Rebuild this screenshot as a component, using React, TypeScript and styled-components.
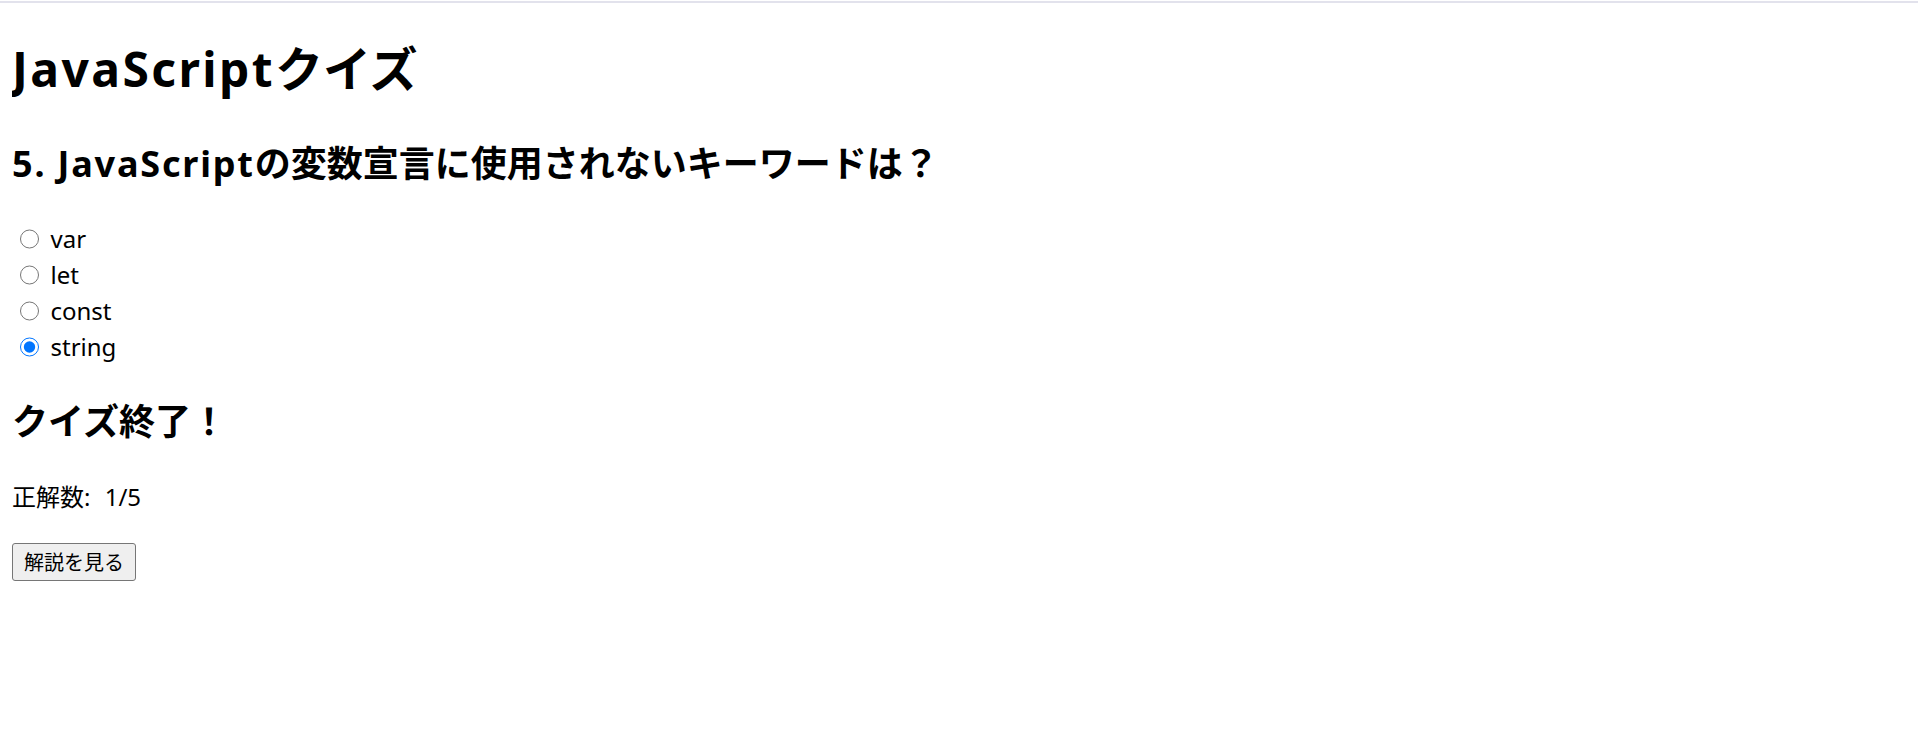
import styled, { createGlobalStyle } from 'styled-components';

const GlobalStyle = createGlobalStyle`
  body {
    margin: 12px;
    background: #ffffff;
    color: #000000;
    font-family: "Noto Sans", "Noto Sans CJK JP", sans-serif;
    font-size: 24px;
    line-height: 1.5;
  }
`;

const WindowEdge = styled.div`
  position: fixed;
  top: 1px;
  left: 0;
  right: 0;
  height: 2px;
  background-color: #e2e2ec;
`;

const Title = styled.h1`
  font-size: 48px;
  font-weight: 700;
  margin: 21px 0 32px;
  line-height: 1.5;
`;

const Heading = styled.h2`
  font-size: 36px;
  font-weight: 700;
  margin: 30px 0;
  line-height: 1.5;
`;

// Latin runs in the bold headings are set a little wider
const Latin = styled.span`
  letter-spacing: 0.05em;
`;

const OptionList = styled.div`
  display: flex;
  flex-direction: column;
`;

const OptionLabel = styled.label`
  display: flex;
  align-items: center;
  height: 36px;
  gap: 7px;
`;

const Radio = styled.input`
  width: 19.5px;
  height: 19.5px;
  margin: 0 4.5px 0 7.5px;
`;

const Score = styled.p`
  margin: 24px 0 28px;
  word-spacing: 8px;
`;

const ExplainButton = styled.button`
  font-family: "Noto Sans CJK JP", sans-serif;
  font-size: 20px;
  line-height: 1.5;
  padding: 3px 11px;
  background-color: #efefef;
  color: #000000;
  border: 1px solid #767676;
  border-radius: 3px;
`;

const options = ['var', 'let', 'const', 'string'];

export function App() {
  return (
    <>
      <GlobalStyle />
      <WindowEdge />
      <Title>
        <Latin>JavaScript</Latin>クイズ
      </Title>
      <Heading>
        <Latin>5. JavaScript</Latin>の変数宣言に使用されないキーワードは？
      </Heading>
      <OptionList>
        {options.map((option) => (
          <OptionLabel key={option}>
            <Radio
              type="radio"
              name="answer"
              value={option}
              defaultChecked={option === 'string'}
            />
            {option}
          </OptionLabel>
        ))}
      </OptionList>
      <Heading>クイズ終了！</Heading>
      <Score>正解数: 1/5</Score>
      <div>
        <ExplainButton>解説を見る</ExplainButton>
      </div>
    </>
  );
}

export default App;
